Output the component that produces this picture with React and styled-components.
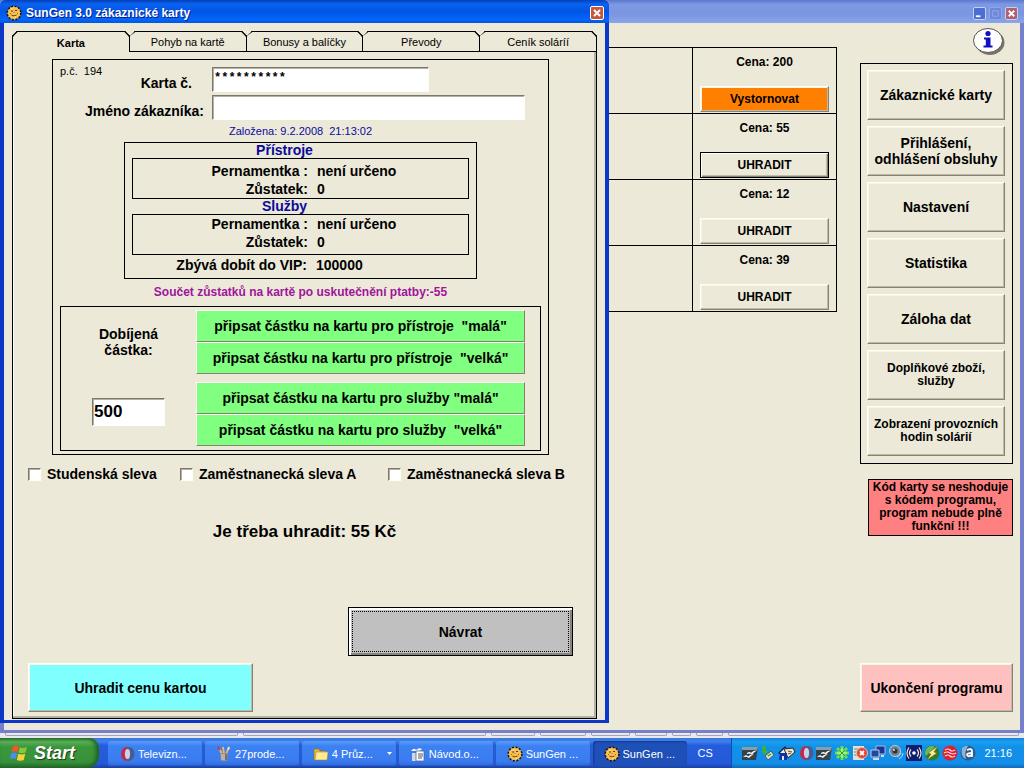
import { useState } from "react";
import styled, { createGlobalStyle, css } from "styled-components";

const color = {
  face: "#ece9d8",
  light: "#fffff4",
  shadow: "#85826f",
  navy: "#0a0a9c",
  green: "#80ff80",
  cyan: "#80ffff",
  orange: "#ff8000",
  pink: "#ffc0c0",
  red: "#ff8080",
  grey: "#c0c0c0",
};

const GlobalStyle = createGlobalStyle`
  * {
    box-sizing: border-box;
  }
  body {
    margin: 0;
    overflow: hidden;
    background: ${color.face};
    color: #000;
    font-family: "Liberation Sans", Arial, sans-serif;
    font-size: 14px;
    font-weight: bold;
  }
  button,
  input {
    font: inherit;
    color: inherit;
  }
`;

const Desktop = styled.div`
  display: flex;
  flex-direction: column;
  height: 100vh;
`;

const Workspace = styled.div`
  position: relative;
  flex: 1;
  min-height: 0;
  display: flex;
  flex-direction: column;
`;

/* main window */

const MainWindow = styled.main`
  flex: 1;
  min-height: 0;
  display: flex;
  flex-direction: column;
  border: solid #7480cc;
  border-width: 0 4px 3px;
`;

const MainTitle = styled.header`
  height: 23px;
  margin: 0 -4px;
  padding: 3px 6px 0 0;
  display: flex;
  align-items: center;
  justify-content: flex-end;
  gap: 3px;
  background: linear-gradient(#5c78d0, #7e9ae2 20%, #7b95e0 60%, #88a6ea);
`;

const CaptionButton = styled.button`
  width: 13px;
  height: 13px;
  padding: 0;
  display: flex;
  border: 1px solid #c4d0f4;
  border-radius: 2px;
  background: ${(props) => props.tone || "#4a6fd4"};
  svg {
    width: 100%;
    height: 100%;
  }
  ${(props) =>
    props.faded &&
    css`
      border-color: #8ea6e6;
    `}
`;

const MainBody = styled.div`
  flex: 1;
  min-height: 0;
  display: flex;
  align-items: stretch;
  gap: 23px;
  padding: 0 7px 18px 0;
`;

const PriceTable = styled.table`
  flex: 1;
  align-self: flex-start;
  margin-top: 24px;
  border-collapse: collapse;
  font-size: 12px;
  td {
    height: 66px;
    padding: 0;
    border: 1px solid #000;
    vertical-align: top;
  }
  td:last-child {
    width: 144px;
  }
`;

const PriceCell = styled.div`
  height: 65px;
  padding: 6px 7px 1px;
  display: flex;
  flex-direction: column;
  justify-content: space-between;
  text-align: center;
  line-height: 16px;
`;

const bevel = css`
  border: 1px solid;
  border-color: ${color.light} ${color.shadow} ${color.shadow} ${color.light};
  box-shadow: inset -1px -1px #bfbba8, inset 1px 1px #f8f5e8;
`;

const Button = styled.button`
  ${bevel}
  padding: 0 4px;
  background: ${(props) => props.tone || color.face};
  white-space: pre-line;
  cursor: pointer;
`;

const PayButton = styled(Button)`
  height: 26px;
  ${(props) =>
    props.primary &&
    css`
      border-color: #000;
      box-shadow: inset 1px 1px #fff, inset -1px -1px ${color.shadow},
        inset -2px -2px #bfbba8;
    `}
`;

const Side = styled.aside`
  width: 153px;
  display: flex;
  flex-direction: column;
`;

const InfoButton = styled.button`
  align-self: flex-end;
  width: 32px;
  height: 28px;
  margin: 5px 8px 0 0;
  padding: 0;
  border: 0;
  background: none;
  cursor: pointer;
`;

const Menu = styled.nav`
  margin-top: 7px;
  padding: 6px 7px 7px 6px;
  display: flex;
  flex-direction: column;
  gap: 6px;
  border: 1px solid #000;
`;

const MenuButton = styled(Button)`
  height: 50px;
  padding: 0;
  font-size: ${(props) => (props.small ? "12px" : "14px")};
  line-height: ${(props) => (props.small ? "13px" : "16px")};
`;

const Notice = styled.p`
  margin: 15px 0 0 8px;
  padding: 1px 0 2px;
  border: 1px solid #000;
  background: ${color.red};
  font-size: 12px;
  line-height: 13px;
  text-align: center;
  white-space: pre-line;
`;

const QuitButton = styled(Button)`
  height: 49px;
  margin-top: auto;
`;

/* status fields that show between the window and the task bar */

const StatusStrip = styled.div`
  height: 5px;
  padding: 0 5px 2px;
  display: flex;
  gap: 5px;
  background: #e9e8ec;
`;

const StatusField = styled.span`
  flex: ${(props) => props.size} 1 0;
  border: 1px solid #a5a2b4;
  border-top: 0;
  border-radius: 0 0 2px 2px;
`;

/* card dialog */

const Dialog = styled.section`
  position: absolute;
  top: 0;
  left: 0;
  width: calc(100% - 415px);
  min-width: 580px;
  height: calc(100% - 15px);
  display: flex;
  flex-direction: column;
  border: solid #0c36c4;
  border-width: 0 4px 3px;
  border-radius: 6px 6px 0 0;
  background: ${color.face};
  box-shadow: inset 0 0 0 1px #e4e6ee;
`;

const DialogTitle = styled.header`
  height: 23px;
  margin: 0 -4px;
  padding: 3px 5px 0 6px;
  display: flex;
  align-items: center;
  gap: 4px;
  border-radius: 6px 6px 0 0;
  background: linear-gradient(#0340b8, #0a62f0 18%, #0055e5 50%, #0466fa 85%, #0256dc);
  color: #fff;
  font-size: 12px;
  text-shadow: 1px 1px #0a1a88;
  h1 {
    flex: 1;
    margin: 0;
    font-size: inherit;
  }
`;

const CloseButton = styled(CaptionButton)`
  width: 14px;
  height: 14px;
  border-color: #fff;
`;

const DialogBody = styled.div`
  flex: 1;
  min-height: 0;
  padding: 8px 8px 1px;
  display: flex;
  flex-direction: column;
`;

const Tabs = styled.div`
  display: flex;
`;

const Tab = styled.button`
  flex: 1;
  height: 21px;
  padding: 0;
  border: 1px solid #000;
  border-left-width: ${(props) => (props.first ? "1px" : "0")};
  border-radius: 5px 5px 0 0;
  corner-shape: bevel;
  background: ${color.face};
  font-size: 11px;
  font-weight: normal;
  ${(props) =>
    props.active &&
    css`
      border-bottom-width: 0;
      font-weight: bold;
      padding-top: 2px;
    `}
`;

const TabPanel = styled.div`
  flex: 1;
  min-height: 0;
  padding: 7px 0 6px;
  display: flex;
  flex-direction: column;
  border: solid #000;
  border-width: 0 1px 1px;
  box-shadow: inset -2px -2px #b4b1a4, inset 1px 0 #fff;
`;

const CardBox = styled.div`
  margin: 0 47px 0 39px;
  padding: 7px 7px 3px;
  border: 1px solid #000;
`;

const FieldRow = styled.div`
  display: flex;
  height: 25px;
  margin-bottom: 3px;
`;

const CardNumber = styled.span`
  font-size: 11px;
  font-weight: normal;
  line-height: 8px;
`;

const FieldLabel = styled.label`
  width: 152px;
  padding-right: ${(props) => props.inset};
  display: flex;
  justify-content: flex-end;
  line-height: 32px;
`;

const FieldHead = styled.div`
  width: 152px;
  display: flex;
  white-space: pre;
  ${FieldLabel} {
    flex: 1;
  }
`;

const sunken = css`
  border: 1px solid;
  border-color: #7a776c #fffff8 #fffff8 #7a776c;
  border-radius: 0;
  background: #fff;
  box-shadow: inset 1px 1px #b4b1a4;
`;

const TextInput = styled.input`
  ${sunken}
  width: ${(props) => props.w};
  min-width: 0;
  padding: 0 1px;
`;

const CodeInput = styled(TextInput)`
  padding-bottom: 3px;
  font-family: "Liberation Mono", monospace;
  font-size: 12px;
`;

const Created = styled.p`
  margin: 3px 0;
  color: ${color.navy};
  font-size: 11px;
  font-weight: normal;
  line-height: 16px;
  text-align: center;
  white-space: pre;
`;

const BalanceBox = styled.div`
  margin: 0 64px;
  padding: 0 7px 4px;
  border: 1px solid #000;
`;

const BalanceTitle = styled.h2`
  margin: 0;
  padding-right: 32px;
  color: ${color.navy};
  font-size: 14px;
  line-height: 15px;
  text-align: center;
`;

const BalanceGroup = styled.div`
  padding: ${(props) => (props.low ? "3px 0 0" : "0 0 3px")};
  border: 1px solid #000;
`;

const BalanceRow = styled.div`
  display: grid;
  grid-template-columns: 175px 1fr;
  gap: 9px;
  line-height: 18px;
  span:first-child {
    text-align: right;
  }
`;

const VipRow = styled(BalanceRow)`
  margin-top: 1px;
`;

const Summary = styled.p`
  margin: 5px 0 6px;
  color: #a0149c;
  font-size: 12px;
  line-height: 16px;
  text-align: center;
`;

const TopUp = styled.div`
  padding: 3px 15px 4px 0;
  display: flex;
  border: 1px solid #000;
`;

const Amount = styled.div`
  width: 135px;
  padding-top: 16px;
  display: flex;
  flex-direction: column;
  align-items: center;
  gap: 40px;
  text-align: center;
  line-height: 16px;
`;

const AmountInput = styled(TextInput)`
  height: 28px;
  font-size: 17px;
`;

const TopUpActions = styled.div`
  flex: 1;
  display: flex;
  flex-direction: column;
  gap: 8px;
`;

const Pair = styled.div`
  display: flex;
  flex-direction: column;
`;

const TopUpButton = styled(Button)`
  height: 32px;
  box-shadow: none;
  white-space: pre;
`;

const Discounts = styled.div`
  margin-top: 10px;
  padding: 0 15px;
  display: grid;
  grid-template-columns: 152px 208px 1fr;
`;

const Check = styled.label`
  display: flex;
  align-items: center;
  gap: 6px;
  line-height: 18px;
  input {
    ${sunken}
    appearance: none;
    width: 13px;
    height: 13px;
    margin: 0;
  }
  input:checked {
    background: radial-gradient(#000 40%, #fff 45%);
  }
`;

const Total = styled.p`
  margin: 39px 0 0;
  font-size: 17px;
  line-height: 20px;
  text-align: center;
`;

const BigButton = styled(Button)`
  width: 225px;
  height: 49px;
`;

const ReturnButton = styled(BigButton)`
  align-self: flex-end;
  margin: auto 23px 7px 0;
  border-color: #000;
  box-shadow: inset 2px 2px #fff, inset -2px -2px #87827c;
  outline: 1px dotted #000;
  outline-offset: -5px;
`;

const PayCardButton = styled(BigButton)`
  margin-left: 15px;
`;

/* task bar */

const TaskBar = styled.footer`
  height: 30px;
  display: flex;
  background: linear-gradient(#3a78d8, #3d80f0 12%, #245ddb 25%, #2459d8 85%, #1941a5);
  color: #fff;
  font-size: 11px;
  font-weight: normal;
`;

const StartButton = styled.button`
  width: 99px;
  padding: 0 0 0 10px;
  display: flex;
  align-items: center;
  gap: 6px;
  border: 0;
  border-radius: 0 10px 12px 0;
  background: linear-gradient(#2d7a2d, #5aae58 12%, #3b963b 30%, #36913a 80%, #246a28);
  box-shadow: inset -3px 0 4px #1f5e22;
  font-size: 18px;
  font-weight: bold;
  font-style: italic;
  text-shadow: 1px 1px 1px #1b3a1b;
`;

const TaskList = styled.div`
  flex: 1;
  min-width: 0;
  margin-left: 9px;
  padding: 3px 0 2px;
  display: flex;
  gap: 2px;
`;

const TaskButton = styled.button`
  flex: 1;
  min-width: 0;
  padding: 0 5px 0 11px;
  display: flex;
  align-items: center;
  gap: 3px;
  border: 0;
  border-radius: 3px;
  background: linear-gradient(#5a9cfa, #3c81f2 20%, #3a7cf0 80%, #2f68d8);
  box-shadow: inset -1px -1px #2a5cc8;
  text-align: left;
  white-space: nowrap;
  svg {
    flex: none;
  }
  span {
    flex: 1;
    overflow: hidden;
  }
  ${(props) =>
    props.active &&
    css`
      background: #1e50b8;
      box-shadow: inset 1px 1px 2px #123a8c;
    `}
`;

const Language = styled.span`
  width: 44px;
  padding-left: 10px;
  font-size: 11px;
  line-height: 30px;
`;

const Tray = styled.div`
  padding: 0 12px 0 10px;
  display: flex;
  align-items: center;
  gap: 2px;
  border-left: 1px solid #0f4bb0;
  background: linear-gradient(#1a80d8, #19a0f2 12%, #1290e8 30%, #128ee8 85%, #0f6ab8);
`;

const Clock = styled.time`
  margin-left: 6px;
`;

const SunIcon = () => (
  <svg width="16" height="16" viewBox="0 0 16 16">
    <circle cx="8" cy="8" r="6.8" fill="#f5b848" stroke="#1c1408" strokeWidth="1.600" strokeDasharray="2 1.600" />
    <circle cx="8" cy="8" r="5.800" fill="#f8c050" />
    <path d="M5 6h2M9 5.500h2M5.500 10q2.500 2 5 0" stroke="#5c3c10" fill="none" />
    <path d="M8 7v1M4 8.500h1M11 8.500h1" stroke="#9a6818" />
    <path d="M5 4h2M8 12h2" stroke="#fff0a8" />
  </svg>
);

const CloseIcon = () => (
  <svg viewBox="0 0 12 12">
    <path d="M3 3l6 6M9 3l-6 6" stroke="#fff" strokeWidth="2" />
  </svg>
);

const InfoIcon = () => (
  <svg width="32" height="28" viewBox="0 0 32 28">
    <ellipse cx="17" cy="14.5" rx="14.5" ry="12.5" fill="#77756c" />
    <ellipse cx="15" cy="12.5" rx="14.5" ry="12" fill="#fff" stroke="#55534c" />
    <circle cx="15" cy="5.5" r="2.6" fill="#1010c0" />
    <path d="M11 9.5h6.5v8h2v2h-9v-2h2.3v-6H11z" fill="#1010c0" />
  </svg>
);

const WindowsFlag = () => (
  <svg width="18" height="18" viewBox="0 0 18 18">
    <path d="M3 2.5q3-2 6 0L7.500 8q-3-1.500-6 0z" fill="#f0582c" />
    <path d="M10 3q3 1.800 7 0l-1.500 5.500q-3.500 1.500-7 0z" fill="#84c83c" />
    <path d="M1.200 9.200q3-1.600 6 0L5.800 15q-3-1.600-6 0z" fill="#4c8cf0" />
    <path d="M8.200 9.800q3.500 1.600 7 0L13.800 16q-3.500 1.500-7 0z" fill="#fcd034" />
  </svg>
);

const OperaIcon = () => (
  <svg width="16" height="16" viewBox="0 0 16 16">
    <ellipse cx="10" cy="8" rx="5.500" ry="7" fill="#4a5c8c" />
    <path d="M8 1a6 7 0 100 14l1-2V3z" fill="#c02c44" />
    <ellipse cx="8.500" cy="8" rx="2.600" ry="5" fill="#c8d0ec" />
  </svg>
);

const BrushesIcon = () => (
  <svg width="16" height="16" viewBox="0 0 16 16">
    <path d="M3 2l3 6M7 1l1 7M13 1l-3 7" stroke="#e8b878" strokeWidth="1.800" />
    <path d="M2 1l2 3" stroke="#d03828" strokeWidth="2" />
    <path d="M13 1l-1 3" stroke="#f0e0b0" strokeWidth="2" />
    <path d="M4 7h8l-1 8H5z" fill="#9a8e84" />
    <path d="M6 8v6M8 8v6" stroke="#dcd4cc" />
    <path d="M10 8v6" stroke="#5a4c48" />
  </svg>
);

const FolderIcon = () => (
  <svg width="16" height="16" viewBox="0 0 16 16">
    <path d="M1 3h5l1 2h6v9H1z" fill="#e4b83c" stroke="#8a6a1c" strokeWidth=".6" />
    <path d="M3 6h12l-1 8H2z" fill="#fdeb98" stroke="#b08c2c" strokeWidth=".6" />
  </svg>
);

const DocumentIcon = () => (
  <svg width="16" height="16" viewBox="0 0 16 16">
    <path d="M1 5q3-4 5-1 3-3 6-1l-2 2H3z" fill="#f4f6fa" />
    <path d="M2 7h7v8H2z" fill="#d2d8e6" />
    <path d="M6 5h8v10H6z" fill="#fff" stroke="#56688a" strokeWidth=".8" />
    <path d="M8 8h5M8 10h5M8 12h4" stroke="#465878" />
  </svg>
);

const OfficeIcon = () => (
  <svg width="16" height="16" viewBox="0 0 16 16">
    <path d="M0 2h16l-2 13H0z" fill="#34424c" />
    <path d="M0 2h16l-1 3H0z" fill="#8c9ca6" />
    <path d="M5 8q3-2 4 0 2-3 6-2.500Q12 7 10 9.500 7 8 5 9zM1 12q3-3 5-.500Q8 9 12 9.500 9 10 7 13q-3-2-6-1z" fill="#fff" />
  </svg>
);

const SafeRemoveIcon = () => (
  <svg width="16" height="16" viewBox="0 0 16 16">
    <path d="M2 1h4v5h3L5 10 1 6h1z" fill="#38b048" />
    <path d="M5 11l6-5 3 4-6 5z" fill="#d4dcd4" stroke="#48604c" />
    <path d="M8 11l3-2" stroke="#38a048" strokeWidth="1.500" />
  </svg>
);

const HouseIcon = () => (
  <svg width="18" height="16" viewBox="0 0 18 16">
    <path d="M1 8l6-6 3 3-3 5z" fill="#e8eef8" stroke="#10182c" strokeWidth="1.200" />
    <path d="M6 4l9-1 2 4-7 6z" fill="#f4e4c4" stroke="#20242c" />
    <path d="M10 6l4 1M10 9l3-1" stroke="#58503c" />
    <path d="M2 8h7v7H1z" fill="#1030a8" />
    <path d="M4 11h2v4H4z" fill="#dce4f8" />
  </svg>
);

const CloverIcon = () => (
  <svg width="16" height="16" viewBox="0 0 16 16">
    <path d="M8 1v14M1 8h14M3 3l10 10M13 3L3 13" stroke="#6ae048" strokeWidth="2.800" />
    <path d="M8 3v10M3 8h10" stroke="#d4fcac" />
    <path d="M5 5l6 6M11 5l-6 6" stroke="#2ca040" />
  </svg>
);

const ErrorIcon = () => (
  <svg width="16" height="16" viewBox="0 0 16 16">
    <path d="M1 1h11v14H1z" fill="#dce4e0" />
    <path d="M2 4h4M2 7h3M2 10h3" stroke="#4c9c70" />
    <circle cx="10" cy="8" r="5.500" fill="#e04434" stroke="#f8b4a8" />
    <path d="M8 6l4 4M12 6l-4 4" stroke="#fff" strokeWidth="1.800" />
  </svg>
);

const NetworkIcon = () => (
  <svg width="16" height="16" viewBox="0 0 16 16">
    <path d="M6 1h9v8H6z" fill="#1a3490" stroke="#a8b8dc" />
    <path d="M1 5h8v7H1z" fill="#24489c" stroke="#c0cce4" />
    <path d="M3 14h6M11 11h3" stroke="#d4dce8" strokeWidth="2" />
  </svg>
);

const VolumeIcon = () => (
  <svg width="16" height="16" viewBox="0 0 16 16">
    <circle cx="7" cy="6" r="5.500" fill="#75828c" stroke="#c0ccd4" />
    <circle cx="7" cy="6" r="2.500" fill="#28343c" />
    <circle cx="6" cy="5" r="1" fill="#d8e4ec" />
    <path d="M11 14q4-2 4-6M9 12q3-1 4-4" stroke="#b0dcf8" fill="none" />
  </svg>
);

const WirelessIcon = () => (
  <svg width="16" height="16" viewBox="0 0 16 16">
    <path d="M0 0h16v16H0z" fill="#101c70" />
    <circle cx="8" cy="8" r="1.800" fill="#fff" />
    <path d="M5 4.500q-3 3.500 0 7M11 4.500q3 3.500 0 7M3 2.500q-4 5.500 0 11M13 2.500q4 5.500 0 11" stroke="#e8ecc8" fill="none" strokeWidth="1.200" />
  </svg>
);

const BoltIcon = () => (
  <svg width="16" height="16" viewBox="0 0 16 16">
    <circle cx="8" cy="8" r="7.500" fill="#2c7c34" />
    <path d="M3 3a7 7 0 018-1L2 11a7 7 0 011-8" fill="#6cb860" />
    <path d="M14 1L4 8l3 1-4 6 10-7-3-1z" fill="#fcec90" stroke="#786418" strokeWidth=".6" />
  </svg>
);

const GlobeIcon = () => (
  <svg width="16" height="16" viewBox="0 0 16 16">
    <circle cx="8" cy="8" r="7.500" fill="#dc2030" />
    <path d="M3 5q3-2 5 0t5 0M2 8q3-2 6 0t6 0M3 11q3-2 5 0t5 0" stroke="#fcdce0" fill="none" strokeWidth="1.200" />
  </svg>
);

const AvastIcon = () => (
  <svg width="16" height="16" viewBox="0 0 16 16">
    <circle cx="8" cy="8" r="7.500" fill="#2c5c8c" />
    <path d="M2 3q4-3 6-2-4 6-2 13-6-2-4-11z" fill="#8cb4d4" />
    <path d="M7 5q5-2 5 1v6M12 8q-5 0-5 2 1 2.500 5 0" stroke="#fff" fill="none" strokeWidth="1.800" />
  </svg>
);

const prices = [
  { price: 200, action: "Vystornovat", tone: color.orange },
  { price: 55, action: "UHRADIT", primary: true },
  { price: 12, action: "UHRADIT" },
  { price: 39, action: "UHRADIT" },
];

const menu = [
  { label: "Zákaznické karty" },
  { label: "Přihlášení,\nodhlášení obsluhy" },
  { label: "Nastavení" },
  { label: "Statistika" },
  { label: "Záloha dat" },
  { label: "Doplňkové zboží,\nslužby", small: true },
  { label: "Zobrazení provozních\nhodin solárií", small: true },
];

const tabs = ["Karta", "Pohyb na kartě", "Bonusy a balíčky", "Převody", "Ceník soláríí"];

const topUps = [
  ['připsat částku na kartu pro přístroje  "malá"', 'připsat částku na kartu pro přístroje  "velká"'],
  ['připsat částku na kartu pro služby "malá"', 'připsat částku na kartu pro služby  "velká"'],
];

const discounts = ["Studenská sleva", "Zaměstnanecká sleva A", "Zaměstnanecká sleva B"];

const tasks = [
  { label: "Televizn...", Icon: OperaIcon },
  { label: "27prode...", Icon: BrushesIcon },
  { label: "4 Průz...", Icon: FolderIcon, group: true },
  { label: "Návod.o...", Icon: DocumentIcon },
  { label: "SunGen ...", Icon: SunIcon },
  { label: "SunGen ...", Icon: SunIcon, active: true },
];

const trayIcons = [
  OfficeIcon,
  SafeRemoveIcon,
  HouseIcon,
  OperaIcon,
  OfficeIcon,
  CloverIcon,
  ErrorIcon,
  NetworkIcon,
  VolumeIcon,
  WirelessIcon,
  BoltIcon,
  GlobeIcon,
  AvastIcon,
];

const statusFields = [236, 245, 43, 45, 38, 30, 18, 25, 295];

const Balance = ({ title, low }) => (
  <>
    <BalanceTitle>{title}</BalanceTitle>
    <BalanceGroup low={low}>
      <BalanceRow>
        <span>Pernamentka :</span>
        <span>není určeno</span>
      </BalanceRow>
      <BalanceRow>
        <span>Zůstatek:</span>
        <span>0</span>
      </BalanceRow>
    </BalanceGroup>
  </>
);

const CardDialog = () => {
  const [tab, setTab] = useState(tabs[0]);

  return (
    <Dialog role="dialog" aria-labelledby="dialog-title">
      <DialogTitle>
        <SunIcon />
        <h1 id="dialog-title">SunGen 3.0 zákaznické karty</h1>
        <CloseButton tone="#c8583c" aria-label="Zavřít">
          <CloseIcon />
        </CloseButton>
      </DialogTitle>
      <DialogBody>
        <Tabs role="tablist">
          {tabs.map((name, i) => (
            <Tab
              key={name}
              role="tab"
              first={i === 0}
              active={name === tab}
              aria-selected={name === tab}
              onClick={() => setTab(name)}
            >
              {name}
            </Tab>
          ))}
        </Tabs>
        <TabPanel role="tabpanel">
          <CardBox>
            <FieldRow>
              <FieldHead>
                <CardNumber>{"p.č.  194"}</CardNumber>
                <FieldLabel htmlFor="card" inset="20px">
                  Karta č.
                </FieldLabel>
              </FieldHead>
              <CodeInput id="card" w="217px" defaultValue="**********" />
            </FieldRow>
            <FieldRow>
              <FieldLabel htmlFor="name" inset="8px">
                Jméno zákazníka:
              </FieldLabel>
              <TextInput id="name" w="313px" />
            </FieldRow>
            <Created>{"Založena: 9.2.2008  21:13:02"}</Created>
            <BalanceBox>
              <Balance title="Přístroje" low />
              <Balance title="Služby" />
              <VipRow>
                <span>Zbývá dobít do VIP:</span>
                <span>100000</span>
              </VipRow>
            </BalanceBox>
            <Summary>Součet zůstatků na kartě po uskutečnění ptatby:-55</Summary>
            <TopUp>
              <Amount>
                <label htmlFor="amount">
                  Dobíjená
                  <br />
                  částka:
                </label>
                <AmountInput id="amount" w="73px" defaultValue="500" />
              </Amount>
              <TopUpActions>
                {topUps.map((pair) => (
                  <Pair key={pair[0]}>
                    {pair.map((label) => (
                      <TopUpButton key={label} tone={color.green}>
                        {label}
                      </TopUpButton>
                    ))}
                  </Pair>
                ))}
              </TopUpActions>
            </TopUp>
          </CardBox>
          <Discounts>
            {discounts.map((label) => (
              <Check key={label}>
                <input type="checkbox" />
                {label}
              </Check>
            ))}
          </Discounts>
          <Total>Je třeba uhradit: 55 Kč</Total>
          <ReturnButton tone={color.grey}>Návrat</ReturnButton>
          <PayCardButton tone={color.cyan}>Uhradit cenu kartou</PayCardButton>
        </TabPanel>
      </DialogBody>
    </Dialog>
  );
};

const App = () => (
  <>
    <GlobalStyle />
    <Desktop>
      <Workspace>
        <MainWindow>
          <MainTitle>
            <CaptionButton aria-label="Minimalizovat">
              <svg viewBox="0 0 12 12">
                <path d="M2 9h5" stroke="#fff" strokeWidth="2" />
              </svg>
            </CaptionButton>
            <CaptionButton faded tone="#7088dc" aria-label="Maximalizovat">
              <svg viewBox="0 0 12 12">
                <path d="M3 3h6v6H3z" stroke="#93a9e8" fill="none" />
              </svg>
            </CaptionButton>
            <CaptionButton tone="#b06070" aria-label="Zavřít">
              <CloseIcon />
            </CaptionButton>
          </MainTitle>
          <MainBody>
            <PriceTable>
              <tbody>
                {prices.map(({ price, action, tone, primary }) => (
                  <tr key={price}>
                    <td />
                    <td>
                      <PriceCell>
                        Cena: {price}
                        <PayButton tone={tone} primary={primary}>
                          {action}
                        </PayButton>
                      </PriceCell>
                    </td>
                  </tr>
                ))}
              </tbody>
            </PriceTable>
            <Side>
              <InfoButton aria-label="Informace">
                <InfoIcon />
              </InfoButton>
              <Menu>
                {menu.map(({ label, small }) => (
                  <MenuButton key={label} small={small}>
                    {label}
                  </MenuButton>
                ))}
              </Menu>
              <Notice>{"Kód karty se neshoduje\ns kódem programu,\nprogram nebude plně\nfunkční !!!"}</Notice>
              <QuitButton tone={color.pink}>Ukončení programu</QuitButton>
            </Side>
          </MainBody>
        </MainWindow>
        <StatusStrip>
          {statusFields.map((size, i) => (
            <StatusField key={i} size={size} />
          ))}
        </StatusStrip>
        <CardDialog />
      </Workspace>
      <TaskBar>
        <StartButton>
          <WindowsFlag />
          Start
        </StartButton>
        <TaskList>
          {tasks.map(({ label, Icon, active, group }, i) => (
            <TaskButton key={i} active={active}>
              <Icon />
              <span>{label}</span>
              {group && (
                <svg width="5" height="3" viewBox="0 0 5 3">
                  <path d="M0 0h5L2.500 3z" fill="#fff" />
                </svg>
              )}
            </TaskButton>
          ))}
        </TaskList>
        <Language>CS</Language>
        <Tray>
          {trayIcons.map((Icon, i) => (
            <Icon key={i} />
          ))}
          <Clock>21:16</Clock>
        </Tray>
      </TaskBar>
    </Desktop>
  </>
);

export default App;
